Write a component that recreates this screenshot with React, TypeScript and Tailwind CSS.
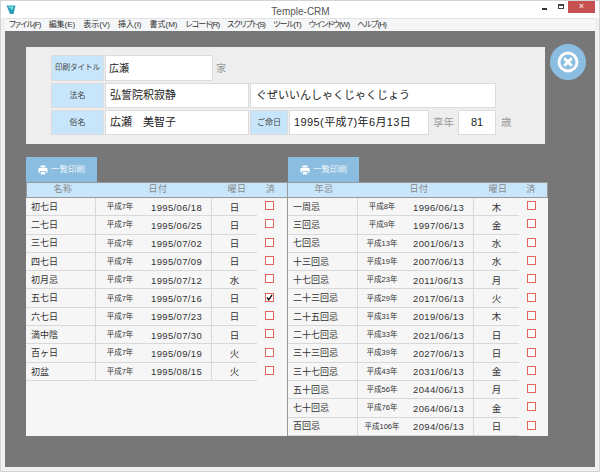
const FONT = "font-['Liberation_Sans','Noto_Sans_CJK_JP',sans-serif]";

const menus = [
  { label: "ファイル(F)", kana: true },
  { label: "編集(E)" },
  { label: "表示(V)" },
  { label: "挿入(I)" },
  { label: "書式(M)" },
  { label: "レコード(R)", kana: true },
  { label: "スクリプト(S)", kana: true },
  { label: "ツール(T)", kana: true },
  { label: "ウインドウ(W)", kana: true },
  { label: "ヘルプ(H)", kana: true },
];

type Row = { name: string; era: string; date: string; day: string; done?: boolean };

const leftRows: Row[] = [
  { name: "初七日", era: "平成7年", date: "1995/06/18", day: "日" },
  { name: "二七日", era: "平成7年", date: "1995/06/25", day: "日" },
  { name: "三七日", era: "平成7年", date: "1995/07/02", day: "日" },
  { name: "四七日", era: "平成7年", date: "1995/07/09", day: "日" },
  { name: "初月忌", era: "平成7年", date: "1995/07/12", day: "水" },
  { name: "五七日", era: "平成7年", date: "1995/07/16", day: "日", done: true },
  { name: "六七日", era: "平成7年", date: "1995/07/23", day: "日" },
  { name: "満中陰", era: "平成7年", date: "1995/07/30", day: "日" },
  { name: "百ヶ日", era: "平成7年", date: "1995/09/19", day: "火" },
  { name: "初盆", era: "平成7年", date: "1995/08/15", day: "火" },
];

const rightRows: Row[] = [
  { name: "一周忌", era: "平成8年", date: "1996/06/13", day: "木" },
  { name: "三回忌", era: "平成9年", date: "1997/06/13", day: "金" },
  { name: "七回忌", era: "平成13年", date: "2001/06/13", day: "水" },
  { name: "十三回忌", era: "平成19年", date: "2007/06/13", day: "水" },
  { name: "十七回忌", era: "平成23年", date: "2011/06/13", day: "月" },
  { name: "二十三回忌", era: "平成29年", date: "2017/06/13", day: "火" },
  { name: "二十五回忌", era: "平成31年", date: "2019/06/13", day: "木" },
  { name: "二十七回忌", era: "平成33年", date: "2021/06/13", day: "日" },
  { name: "三十三回忌", era: "平成39年", date: "2027/06/13", day: "日" },
  { name: "三十七回忌", era: "平成43年", date: "2031/06/13", day: "金" },
  { name: "五十回忌", era: "平成56年", date: "2044/06/13", day: "月" },
  { name: "七十回忌", era: "平成76年", date: "2064/06/13", day: "金" },
  { name: "百回忌", era: "平成106年", date: "2094/06/13", day: "日" },
];

function Printer() {
  return (
    <svg width="10" height="10" viewBox="0 0 10 10" fill="#fff">
      <path d="M2.5 0.5h5v2h-5z" />
      <path d="M0.5 3h9v4.5h-1.5v-1.5h-6v1.5h-1.5z" />
      <path d="M2.8 6.8h4.4v2.7h-4.4z" />
    </svg>
  );
}

function Label({ text, className }: { text: string; className: string }) {
  return (
    <div className={`bg-[#c8e6fb] text-[#444] flex items-center justify-center border border-[#dcdcdc] ${className}`}>
      {text}
    </div>
  );
}

function Value({ text, className }: { text: string; className: string }) {
  return (
    <div className={`bg-white text-[#222] flex items-center border border-[#dcdcdc] ${className}`}>
      {text}
    </div>
  );
}

function Check({ done }: { done?: boolean }) {
  return (
    <div className="w-[9px] h-[9px] bg-white border border-[#e0635c] flex items-center justify-center">
      {done && (
        <svg width="7" height="7" viewBox="0 0 7 7" fill="none" stroke="#111" strokeWidth="1.4">
          <path d="M1 3.5l1.8 2.3L6 0.8" />
        </svg>
      )}
    </div>
  );
}

function EventList({ title, rows, divided }: { title: string; rows: Row[]; divided?: boolean }) {
  return (
    <div className="w-[261px] shrink-0 flex flex-col">
      <div className={`w-[71px] h-[25px] bg-[#8bbde0] flex items-center justify-center gap-[3px] text-[8.5px] text-[#eef6fb] ${divided ? "ml-px" : ""}`}>
        <Printer />
        <span>一覧印刷</span>
      </div>
      <div className={`h-[16px] bg-[#c8e6fb] border-y border-[#999] flex items-center text-[9px] tracking-[0.5px] text-[#888] ${divided ? "border-x" : "border-l"}`}>
        <div className="w-[70px] text-center pl-[2px]">{title}</div>
        <div className="w-[116px] text-center pl-[6px]">日付</div>
        <div className="w-[45px] text-center pl-[3px]">曜日</div>
        <div className="flex-1 text-center pr-[4px]">済</div>
      </div>
      <div className={`h-[238px] bg-[#f6f6f6] flex flex-col ${divided ? "border-l border-[#999]" : ""}`}>
        {rows.map((r) => (
          <div key={r.name} className="h-[18.3px] shrink-0 flex items-center">
            <div className="w-[231px] h-full flex items-center border-b border-[#d8d8d8] text-[#333]">
              <div className="w-[70px] h-full flex items-center pl-[5px] pt-[2px] border-r border-[#d8d8d8] text-[9px]">
                {r.name}
              </div>
              <div className="w-[116px] h-full flex items-center border-r border-[#d8d8d8]">
                <div className="w-[48px] text-center text-[7.5px]">{r.era}</div>
                <div className="ml-[7px] pt-[2px] text-[9.5px] tracking-[0.35px]">{r.date}</div>
              </div>
              <div className="flex-1 h-full flex items-center justify-center pt-[2px] text-[9.5px]">{r.day}</div>
            </div>
            <div className="pl-[8px] pb-[3px]">
              <Check done={r.done} />
            </div>
          </div>
        ))}
      </div>
    </div>
  );
}

export default function App() {
  return (
    <div className={`w-[600px] h-[472px] bg-[#f0f0f0] border border-[#d4d4d4] flex flex-col ${FONT}`}>
      {/* title bar */}
      <div className="h-[17px] shrink-0 bg-white flex items-center text-[#555]">
        <svg width="10" height="10" viewBox="0 0 10 10" className="ml-[5px]">
          <path d="M0.5 0.5h9l-2 8.5h-3.5z" fill="#2a9fb8" />
          <path d="M1.5 1.5h6l-1 3.5z" fill="#7fdde0" />
        </svg>
        <div className="flex-1 text-center text-[10px] pt-[3px] pl-[43px]">Temple-CRM</div>
        <div className="flex items-start h-full">
          <div className="w-[5px] h-[2px] bg-[#333] mt-[7px] mr-[11px]" />
          <div className="w-[6px] h-[5px] border border-[#444] border-t-2 mt-[3px] mr-[4px]" />
          <div className="w-[27px] h-[12px] bg-[#c75050] text-white text-[9px] leading-[11px] text-center mr-[4px]">×</div>
        </div>
      </div>
      {/* menu bar */}
      <div className="h-[13px] mx-[4px] shrink-0 bg-[#f5f6f7] flex items-center gap-2 pl-[4px] text-[8px] text-[#333] border-t border-[#e2e2e2] [font-feature-settings:'palt']">
        {menus.map((m) => (
          <span key={m.label} className={m.kana ? "tracking-[-0.9px]" : ""}>
            {m.label}
          </span>
        ))}
      </div>
      {/* content */}
      <div className="mx-[4px] h-[436px] bg-[#777777] pl-[21px] pt-[16px]">
        <div className="flex gap-[5px] items-start">
          <div className="w-[519px] h-[97px] bg-[#eeeeee] pl-[25px] pt-[8px] flex flex-col gap-[2px] text-[#222]">
            <div className="flex h-[26px] gap-px">
              <Label text="印刷タイトル" className="w-[53px] text-[7.5px]" />
              <Value text="広瀬" className="w-[108px] pl-[3px] text-[10px]" />
              <span className="text-[#999] text-[10px] pl-[2px] self-center">家</span>
            </div>
            <div className="flex h-[25px] gap-px">
              <Label text="法名" className="w-[53px] text-[8px]" />
              <Value text="弘誓院釈寂静" className="w-[144px] pl-[4px] text-[11px]" />
              <Value text="ぐぜいいんしゃくじゃくじょう" className="w-[246px] pl-[5px] text-[11px]" />
            </div>
            <div className="flex h-[25px] gap-px">
              <Label text="俗名" className="w-[53px] text-[8px]" />
              <Value text="広瀬　美智子" className="w-[144px] pl-[4px] text-[11px]" />
              <Label text="ご命日" className="w-[38px] text-[8px]" />
              <Value text="1995(平成7)年6月13日" className="w-[140px] pl-[4px] text-[11px] tracking-[0.4px]" />
              <span className="w-[27px] text-center self-center text-[10.5px] text-[#999]">享年</span>
              <Value text="81" className="w-[38px] justify-center text-[11px]" />
              <span className="pl-[4px] self-center text-[10.5px] text-[#999]">歳</span>
            </div>
          </div>
          <div className="w-[36px] h-[36px] -mt-[3px] rounded-full bg-[#8bbde0] flex items-center justify-center">
            <svg width="22" height="22" viewBox="0 0 22 22" fill="none" stroke="#fff">
              <circle cx="11" cy="11" r="9" strokeWidth="2.8" />
              <path d="M7.2 7.2l7.6 7.6M14.8 7.2l-7.6 7.6" strokeWidth="3" />
            </svg>
          </div>
        </div>
        <div className="flex mt-[13px]">
          <EventList title="名称" rows={leftRows} />
          <EventList title="年忌" rows={rightRows} divided />
        </div>
      </div>
    </div>
  );
}
